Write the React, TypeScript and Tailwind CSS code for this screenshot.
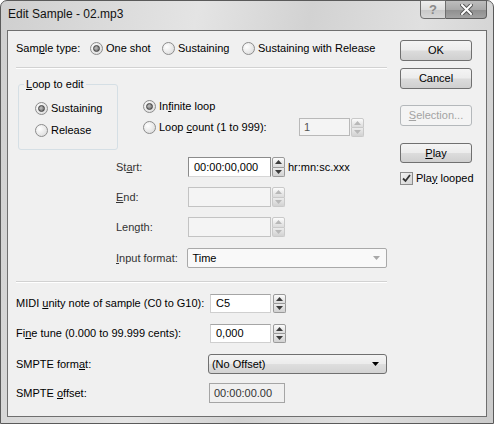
import React from 'react';

const font = "font-['Liberation_Sans',Arial,sans-serif]";

function Radio({ checked }: { checked?: boolean }) {
  return (
    <span className="flex h-[13px] w-[13px] shrink-0 items-center justify-center rounded-full border border-[#8c8c8c] bg-[radial-gradient(circle_at_35%_35%,#ffffff,#d6d6d6)]">
      {checked && (
        <span className="h-[7px] w-[7px] rounded-full border border-[#444] bg-[radial-gradient(circle_at_40%_40%,#c4c4c4,#555555)]" />
      )}
    </span>
  );
}

function Spin({ disabled, tall }: { disabled?: boolean; tall?: boolean }) {
  const c = disabled ? '#b8b8b8' : '#3c3c3c';
  return (
    <div className={`flex w-[13px] shrink-0 flex-col ${tall ? 'h-[20px]' : 'h-[19px]'}`}>
      <div className={`flex flex-1 items-center justify-center rounded-t-[2px] border ${disabled ? 'border-[#c9c9c9]' : 'border-[#9a9a9a]'} bg-gradient-to-b from-[#fbfbfb] to-[#dcdcdc]`}>
        <svg width="7" height="4" viewBox="0 0 7 4">
          <path d="M0 4 L3.5 0 L7 4Z" fill={c} />
        </svg>
      </div>
      <div className={`flex flex-1 items-center justify-center rounded-b-[2px] border border-t-0 ${disabled ? 'border-[#c9c9c9]' : 'border-[#9a9a9a]'} bg-gradient-to-b from-[#ececec] to-[#d2d2d2]`}>
        <svg width="7" height="4" viewBox="0 0 7 4">
          <path d="M0 0 L3.5 4 L7 0Z" fill={c} />
        </svg>
      </div>
    </div>
  );
}

function Button({ children, disabled, h = 'h-[21px]' }: { children: React.ReactNode; disabled?: boolean; h?: string }) {
  return (
    <div
      className={`flex ${h} w-[72px] items-center justify-center rounded-[3px] border ${
        disabled
          ? 'border-[#b4b8bb] bg-[#f4f4f4] text-[#a3a3a3]'
          : 'border-[#707070] bg-[linear-gradient(#f4f4f4_0%,#ececec_48%,#dcdcdc_52%,#cfcfcf_100%)] text-black'
      }`}
    >
      {children}
    </div>
  );
}

function Arrow({ c = '#000' }: { c?: string }) {
  return (
    <svg width="7" height="4" viewBox="0 0 7 4">
      <path d="M0 0 L7 0 L3.5 4Z" fill={c} />
    </svg>
  );
}

export default function App() {
  return (
    <div className={`${font} h-[424px] w-[494px] overflow-hidden text-[11px] leading-none text-black`}>
      <div className="flex h-full w-full flex-col rounded-t-[7px] border border-[#5a5a5a] bg-[linear-gradient(100deg,#cfcfcf_0%,#e4e4e4_35%,#d2d2d2_55%,#e0e0e0_75%,#cbcbcb_100%)]">
        {/* title bar */}
        <div className="flex h-[29px] shrink-0 items-start">
          <div className="mt-[7px] pl-[7px] text-[12px] text-[#111]">Edit Sample - 02.mp3</div>
          <div className="ml-auto mr-[6px] flex -mt-px">
            <div className="flex h-[19px] w-[26px] items-center justify-center rounded-bl-[4px] border border-[#6e6e6e] bg-[linear-gradient(#eeeeee_0%,#dddddd_50%,#c8c8c8_51%,#d6d6d6_100%)] text-[13px] font-bold text-[#8a8a8a]">
              ?
            </div>
            <div className="flex h-[19px] w-[41px] items-center justify-center rounded-br-[4px] border border-l-0 border-[#5e5e5e] bg-[linear-gradient(#bdbdbd_0%,#a9a9a9_50%,#8e8e8e_51%,#a2a2a2_100%)]">
              <svg width="13" height="11" viewBox="0 0 13 11">
                <path d="M2 1 L11 10 M11 1 L2 10" stroke="#555" strokeWidth="4" strokeLinecap="square" />
                <path d="M2 1 L11 10 M11 1 L2 10" stroke="#fff" strokeWidth="2" strokeLinecap="square" />
              </svg>
            </div>
          </div>
        </div>

        {/* client area */}
        <div className="mx-[6px] mb-[6px] flex flex-1 border border-[#6f6f6f] bg-[#f0f0f0] pl-[8px] pt-[7px]">
          {/* left column */}
          <div className="flex w-[371px] flex-col">
            <div className="flex h-[20px] items-center">
              <span className="w-[74px]">
                Sam<u>p</u>le type:
              </span>
              <span className="flex w-[72px] items-center gap-[3px]">
                <Radio checked />
                <span>One shot</span>
              </span>
              <span className="flex w-[80px] items-center gap-[3px]">
                <Radio />
                <span>Sustaining</span>
              </span>
              <span className="flex items-center gap-[3px]">
                <Radio />
                <span>Sustaining with Release</span>
              </span>
            </div>

            <div className="mt-[9px] h-[2px] border-t border-b border-t-[#d2d2d2] border-b-white" />

            {/* loop group */}
            <div className="mt-[15px] flex">
              <div className="relative ml-[2px] h-[66px] w-[100px] rounded-[3px] border border-[#d5dfe5]">
                <span className="absolute -top-[6px] left-[5px] bg-[#f0f0f0] px-[2px]">
                  <u>L</u>oop to edit
                </span>
                <div className="ml-[16px] mt-[16px] flex h-[14px] items-center gap-[3px]">
                  <Radio checked />
                  <span>Sustaining</span>
                </div>
                <div className="ml-[16px] mt-[8px] flex h-[14px] items-center gap-[3px]">
                  <Radio />
                  <span>Release</span>
                </div>
              </div>
              <div className="ml-[25px] flex flex-col">
                <div className="mt-[15px] flex h-[14px] items-center gap-[3px]">
                  <Radio checked />
                  <span>
                    In<u>f</u>inite loop
                  </span>
                </div>
                <div className="mt-[5px] flex h-[18px] items-center">
                  <span className="flex w-[156px] items-center gap-[3px]">
                    <Radio />
                    <span>
                      Loop <u>c</u>ount (1 to 999):
                    </span>
                  </span>
                  <div className="flex items-center gap-px">
                    <div className="flex h-[18px] w-[51px] items-center border border-[#b9b9b9] bg-[#f4f4f4] pl-[4px] text-[#555]">1</div>
                    <Spin disabled />
                  </div>
                </div>
              </div>
            </div>

            {/* time rows */}
            <div className="ml-[100px] mt-[7px] flex flex-col gap-[10px]">
              <div className="flex h-[20px] items-center">
                <span className="w-[72px] text-[#333]">
                  St<u>a</u>rt:
                </span>
                <div className="flex h-[20px] w-[83px] items-center border border-[#8b8b8b] border-b-[#d6d6d6] bg-white pl-[5px]">
                  00:00:00,000
                </div>
                <span className="ml-px">
                  <Spin tall />
                </span>
                <span className="ml-[3px]">hr:mn:sc.xxx</span>
              </div>
              <div className="flex h-[20px] items-center">
                <span className="w-[72px] text-[#333]">
                  <u>E</u>nd:
                </span>
                <div className="h-[20px] w-[83px] border border-[#c3c3c3] bg-[#f4f4f4]" />
                <span className="ml-px">
                  <Spin tall disabled />
                </span>
              </div>
              <div className="flex h-[20px] items-center">
                <span className="w-[72px] text-[#333]">
                  Len<u>g</u>th:
                </span>
                <div className="h-[20px] w-[83px] border border-[#c3c3c3] bg-[#f4f4f4]" />
                <span className="ml-px">
                  <Spin tall disabled />
                </span>
              </div>
              <div className="mt-px flex h-[20px] items-center">
                <span className="w-[72px] text-[#333]">
                  <u>I</u>nput format:
                </span>
                <div className="flex h-[20px] w-[201px] items-center rounded-[2px] border border-[#a9a9a9] bg-[#f9f9f9] pl-[4px] pr-[6px]">
                  <span className="flex-1">Time</span>
                  <Arrow c="#a8a8a8" />
                </div>
              </div>
            </div>

            <div className="mt-[13px] h-[2px] border-t border-b border-t-[#d2d2d2] border-b-white" />

            {/* bottom rows */}
            <div className="mt-[11px] flex flex-col gap-[11px]">
              <div className="flex h-[19px] items-center">
                <span className="w-[194px]">
                  MIDI <u>u</u>nity note of sample (C0 to G10):
                </span>
                <div className="flex h-[19px] w-[61px] items-center border border-[#cfcfcf] border-t-[#a5a5a5] bg-white pl-[5px]">C5</div>
                <span className="ml-[2px]">
                  <Spin />
                </span>
              </div>
              <div className="flex h-[19px] items-center">
                <span className="w-[194px]">
                  Fi<u>n</u>e tune (0.000 to 99.999 cents):
                </span>
                <div className="flex h-[19px] w-[61px] items-center border border-[#cfcfcf] border-t-[#a5a5a5] bg-white pl-[5px]">0,000</div>
                <span className="ml-[2px]">
                  <Spin />
                </span>
              </div>
              <div className="flex h-[20px] items-center">
                <span className="w-[193px]">
                  SMPTE form<u>a</u>t:
                </span>
                <div className="flex h-[20px] w-[180px] items-center rounded-[3px] border border-[#707070] bg-[linear-gradient(#f4f4f4_0%,#ececec_48%,#dedede_52%,#d3d3d3_100%)] pl-[3px] pr-[7px]">
                  <span className="flex-1">(No Offset)</span>
                  <Arrow />
                </div>
              </div>
              <div className="-mt-[2px] flex h-[20px] items-center">
                <span className="w-[193px]">
                  SMPTE <u>o</u>ffset:
                </span>
                <div className="flex h-[20px] w-[76px] items-center border border-[#a5a5a5] bg-[#f0f0f0] pl-[4px] text-[#333]">
                  00:00:00.00
                </div>
              </div>
            </div>
          </div>

          {/* right column */}
          <div className="ml-[13px] flex w-[72px] flex-col">
            <div className="mt-[2px]">
              <Button>OK</Button>
            </div>
            <div className="mt-[7px]">
              <Button>Cancel</Button>
            </div>
            <div className="mt-[16px]">
              <Button disabled>
                <span>
                  <u>S</u>election...
                </span>
              </Button>
            </div>
            <div className="mt-[17px]">
              <Button h="h-[20px]">
                <span>
                  <u>P</u>lay
                </span>
              </Button>
            </div>
            <div className="mt-[8px] flex h-[14px] items-center gap-[3px] whitespace-nowrap">
              <span className="flex h-[13px] w-[13px] shrink-0 items-center justify-center border border-[#8c8c8c] bg-gradient-to-br from-[#f2f2f2] to-[#d4d4d4]">
                <svg width="9" height="9" viewBox="0 0 9 9">
                  <path d="M1 4.5 L3.5 7 L8 1" fill="none" stroke="#333" strokeWidth="1.8" />
                </svg>
              </span>
              <span>
                Pla<u>y</u> looped
              </span>
            </div>
          </div>
        </div>
      </div>
    </div>
  );
}
